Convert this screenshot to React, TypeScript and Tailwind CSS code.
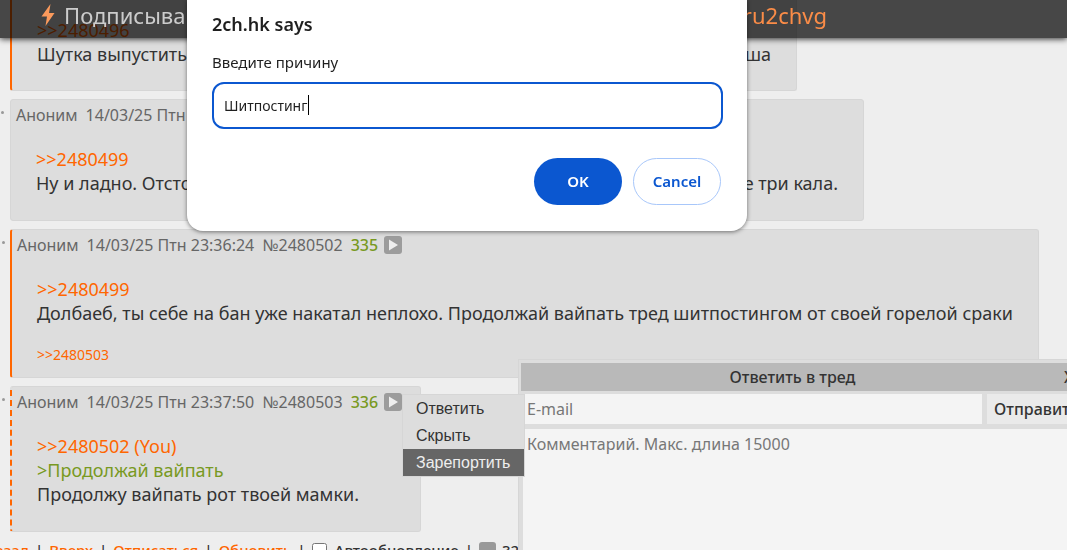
import { ReactNode } from "react";
import clsx from "clsx";

type PostProps = {
  time?: string;
  id?: string;
  num?: number;
  className?: string;
  menu?: ReactNode;
  children: ReactNode;
};

const PlayButton = () => (
  <button type="button" aria-label="Меню поста" className="-ml-0.5 flex size-[18px] items-center justify-center rounded-[3px] bg-[#9c9c9c]">
    <svg viewBox="0 0 18 18" className="size-[18px]" fill="#eee">
      <path d="M5 3.5 14 9 5 14.5Z" />
    </svg>
  </button>
);

const Post = ({ time, id, num, className, menu, children }: PostProps) => (
  <article className={clsx("relative rounded-[3px] border border-[#d6d6d6] bg-[#ddd]", className)}>
    <span className="absolute top-[11px] -left-[10px] size-[3px] rounded-full bg-[#999]" />
    <header className="flex items-center gap-2 pt-[3px] pl-[5px] text-base leading-6 whitespace-nowrap text-[#666]">
      <span>Аноним</span>
      <span>14/03/25 Птн {time}</span>
      {id && <span>№{id}</span>}
      {num && <span className="font-medium text-[#789922]">{num}</span>}
      {num && <PlayButton />}
    </header>
    {menu}
    <div className="mt-5 px-[25px]">{children}</div>
  </article>
);

const Reply = ({ children }: { children: ReactNode }) => (
  <a href="#" className="block text-[#f60]">
    &gt;&gt;{children}
  </a>
);

const PostMenu = () => (
  <div className="absolute top-[7px] left-[390px] z-30 w-[123px] border border-[#d6d6d6] bg-[#ddd] font-['Liberation_Sans',sans-serif] text-base text-[#333]">
    <a href="#" className="block py-px pl-[13px] leading-[25px]">Ответить</a>
    <a href="#" className="block py-px pl-[13px] leading-[25px]">Скрыть</a>
    <a href="#" className="block bg-[#666] py-px pl-[13px] leading-[25px] text-[#eee]">Зарепортить</a>
  </div>
);

const Banner = () => (
  <div className="fixed inset-x-0 top-0 z-10 flex h-[38px] items-start bg-black/70 pl-10 text-[22px] leading-[30px] text-[#ccc] shadow-[0_1px_6px_rgba(0,0,0,0.8)]">
    <svg viewBox="0 0 14 24" className="mt-[3px] mr-2 h-6 w-4 shrink-0" fill="#fb9a5c">
      <path d="M9.5 1 0.5 13.5H6L4.5 23 13.5 10H8Z" />
    </svg>
    <p className="flex w-[763px] justify-between">
      <span>Подписыва</span>
      <a href="#" className="text-[#fb8c47]">ru2chvg</a>
    </p>
  </div>
);

const PromptDialog = () => (
  <form
    role="dialog"
    aria-label="2ch.hk says"
    className="fixed top-0 left-[187px] z-40 flex w-[560px] flex-col rounded-b-2xl bg-white px-[25px] pt-3 pb-[26px] text-[#1f1f1f] shadow-[0_1px_4px_rgba(0,0,0,0.5)]"
  >
    <h2 className="text-lg leading-6 font-semibold">2ch.hk says</h2>
    <label htmlFor="reason" className="mt-4 text-[15px] leading-5">Введите причину</label>
    <div className="relative mt-2.5 -mr-px flex">
      <input
        id="reason"
        defaultValue="Шитпостинг"
        className="h-[47px] w-full rounded-xl border-2 border-[#0b57d0] bg-white px-2.5 text-sm outline-none"
      />
      <span className="absolute top-[13px] left-24 h-5 w-px bg-black" />
    </div>
    <div className="mt-[29px] flex justify-end gap-[11px] pr-px text-[15px] font-semibold">
      <button type="button" className="h-[47px] w-[88px] rounded-full bg-[#0b57d0] text-white">OK</button>
      <button type="button" className="h-[47px] w-[88px] rounded-full border border-[#a8c7fa] text-[#0b57d0]">Cancel</button>
    </div>
  </form>
);

const ReplyForm = () => (
  <div className="fixed top-[359px] right-0 bottom-0 left-[518px] z-20 overflow-hidden border-t border-l border-[#d6d6d6] bg-[#ddd] text-base text-[#333]">
    <form className="flex h-full w-[600px] flex-col pt-[3px] pl-0.5">
      <div className="flex h-7 shrink-0 items-center bg-[#b9b9b9] font-medium">
        <span className="w-[543px] text-center">Ответить в тред</span>
        <button type="button" aria-label="Закрыть">X</button>
      </div>
      <div className="mt-[3px] flex h-[30px] shrink-0 gap-[5px] pl-1">
        <input aria-label="E-mail" placeholder="E-mail" className="w-[457px] bg-[#f4f4f4] px-0.5 placeholder:text-[#777]" />
        <button type="button" className="bg-[#eaeaea] px-[7px] font-medium">Отправить</button>
      </div>
      <textarea
        aria-label="Комментарий"
        placeholder="Комментарий. Макс. длина 15000"
        className="mt-[5px] ml-0.5 grow resize-none bg-[#f4f4f4] px-1 py-[3px] leading-6 placeholder:text-[#777]"
      />
    </form>
  </div>
);

const FooterNav = () => (
  <nav className="-ml-[26px] flex items-center gap-1.5 text-[15px] leading-5 font-medium whitespace-nowrap text-[#333]">
    <a href="#" className="text-[#f60]">Назад</a>
    <span>|</span>
    <a href="#" className="text-[#f60]">Вверх</a>
    <span>|</span>
    <a href="#" className="text-[#f60]">Отписаться</a>
    <span>|</span>
    <a href="#" className="text-[#f60]">Обновить</a>
    <span>|</span>
    <label className="flex items-center gap-2">
      <input type="checkbox" className="size-[15px]" />
      Автообновление
    </label>
    <span>|</span>
    <span className="size-[17px] rounded-[3px] bg-[#999]" />
    <span>32</span>
  </nav>
);

export default function App() {
  return (
    <div className="h-screen overflow-hidden bg-[#eee] font-['Noto_Sans',sans-serif] text-[#333]">
      <Banner />
      <main className="flex flex-col items-start gap-2 pl-2.5 text-lg leading-6">
        <article className="w-[787px] rounded-b-[3px] border border-t-0 border-l-2 border-[#d6d6d6] border-l-[#f60] bg-[#ddd] px-[25px] pt-[18px] pb-6">
          <Reply>2480496</Reply>
          <p className="flex justify-between">
            <span>Шутка выпустить</span>
            <span>ша</span>
          </p>
        </article>

        <Post className="w-[854px] pb-[25px]">
          <Reply>2480499</Reply>
          <p className="flex justify-between">
            <span>Ну и ладно. Отсто</span>
            <span>е три кала.</span>
          </p>
        </Post>

        <Post time="23:36:24" id="2480502" num={335} className="border-l-2 border-l-[#f60] pb-3">
          <Reply>2480499</Reply>
          <p className="whitespace-nowrap">
            Долбаеб, ты себе на бан уже накатал неплохо. Продолжай вайпать тред шитпостингом от своей горелой сраки
          </p>
          <a href="#" className="mt-5 block text-sm leading-5 text-[#f60]">&gt;&gt;2480503</a>
        </Post>

        <Post
          time="23:37:50"
          id="2480503"
          num={336}
          className="w-[411px] border-l-2 border-l-[#f60] pb-[25px] [border-left-style:dashed]"
          menu={<PostMenu />}
        >
          <Reply>2480502 (You)</Reply>
          <p className="text-[#789922]">&gt;Продолжай вайпать</p>
          <p>Продолжу вайпать рот твоей мамки.</p>
        </Post>

        <FooterNav />
      </main>
      <ReplyForm />
      <PromptDialog />
    </div>
  );
}
